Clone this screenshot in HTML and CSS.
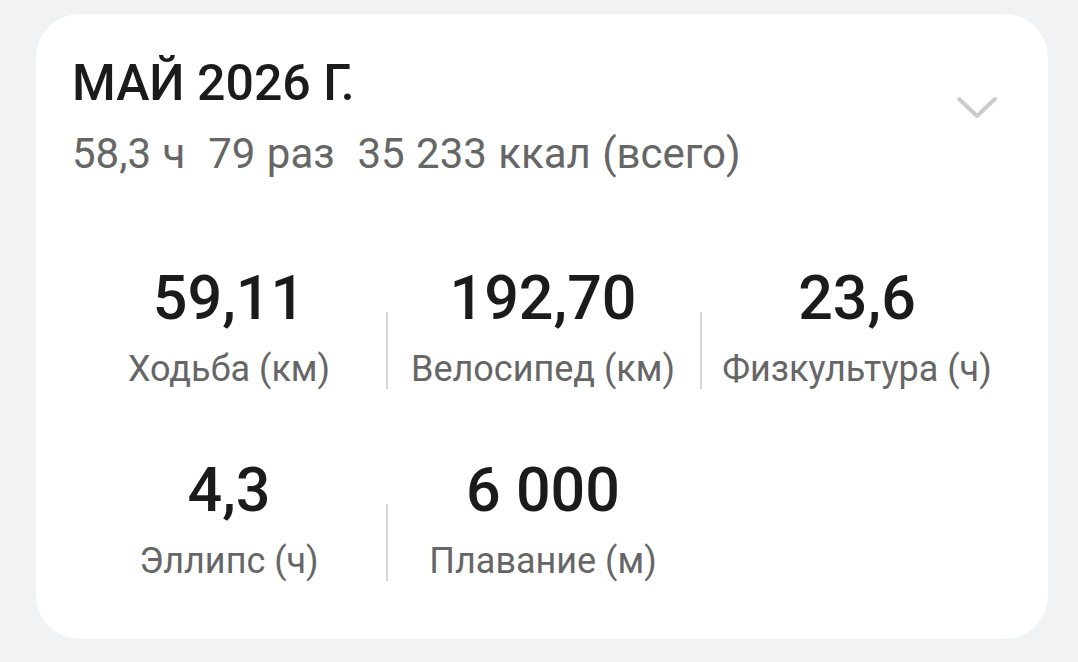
FILE: index.html
```html
<!DOCTYPE html>
<html>
<head>
<meta charset='utf-8' />
<title>Май 2026</title>
<link rel="stylesheet" href="styles.css">
</head>

<body>
<div class="card">
  <div class="card-head">
    <div class="summary">
      <h1 class="month">МАЙ 2026 Г.</h1>
      <p class="totals">58,3 ч&nbsp; 79 раз&nbsp; 35 233 ккал (всего)</p>
    </div>
    <svg class="chevron" width="42" height="24" viewBox="0 0 42 24" xmlns="http://www.w3.org/2000/svg">
      <polyline points="3,3 21,20 39,3" fill="none" stroke="#cbcbcb" stroke-width="4" stroke-linecap="round" stroke-linejoin="round" />
    </svg>
  </div>

  <div class="stats">
    <div class="stat">
      <div class="stat-value">59,11</div>
      <div class="stat-label">Ходьба (км)</div>
    </div>
    <div class="stat">
      <div class="stat-value">192,70</div>
      <div class="stat-label">Велосипед (км)</div>
    </div>
    <div class="stat">
      <div class="stat-value">23,6</div>
      <div class="stat-label">Физкультура (ч)</div>
    </div>
    <div class="stat">
      <div class="stat-value">4,3</div>
      <div class="stat-label">Эллипс (ч)</div>
    </div>
    <div class="stat">
      <div class="stat-value">6 000</div>
      <div class="stat-label">Плавание (м)</div>
    </div>
  </div>
</div>
</body>
</html>
```

FILE: styles.css
```css
body {
  margin: 0;
  background-color: #f1f2f4;
  font-family: Roboto, "Noto Sans", sans-serif;
  color: #1b1b1b;
  height: 662px;
  overflow: hidden;
}
.card {
  margin: 14px 30px 0 36px;
  background-color: #fff;
  border-radius: 44px;
  padding: 39px 32px 54px 36px;
}
.card-head {
  display: flex;
  justify-content: space-between;
  align-items: flex-start;
}
.month {
  margin: 0;
  font-size: 50px;
  line-height: 60px;
  font-weight: 500;
}
.totals {
  margin: 13px 0 0;
  font-size: 42px;
  line-height: 56px;
  color: #666;
  word-spacing: 1px;
}
.chevron {
  margin: 43px 18px 0 0;
}
.stats {
  display: grid;
  grid-template-columns: repeat(3, 314px);
  row-gap: 61px;
  margin-top: 80px;
}
.stat {
  position: relative;
  text-align: center;
}
.stat:not(:nth-child(3n+1))::before {
  content: "";
  position: absolute;
  left: 0;
  top: 50px;
  width: 2px;
  height: 77px;
  background-color: #d6d6d6;
}
.stat-value {
  font-size: 61px;
  line-height: 72px;
  font-weight: 500;
}
.stat-label {
  margin-top: 11px;
  font-size: 36px;
  line-height: 48px;
  color: #666;
}
```
